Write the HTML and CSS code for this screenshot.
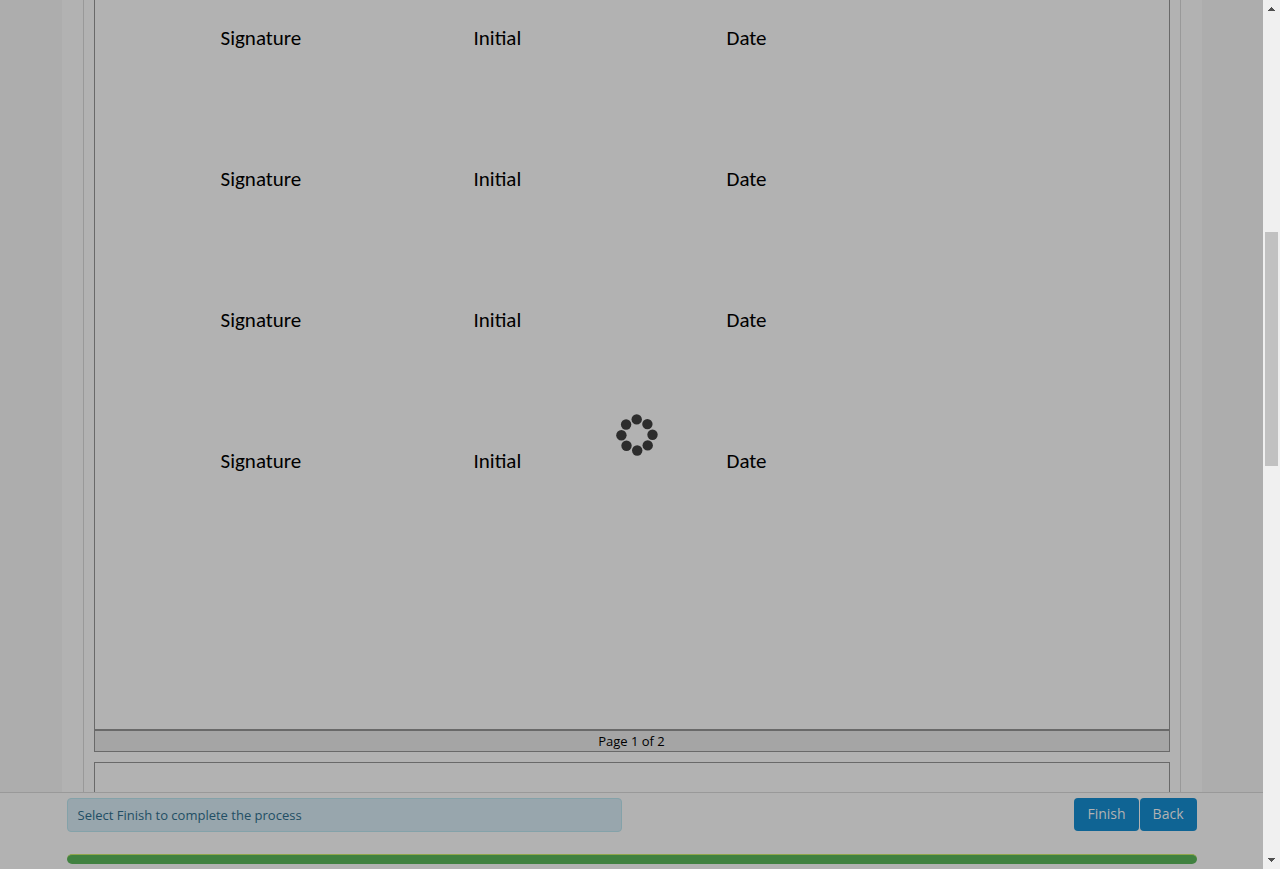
FILE: index.html
```html
<!DOCTYPE html>
<html lang="en">
<head>
<meta charset="utf-8">
<title>Sign document</title>
<link rel="stylesheet" href="styles.css">
</head>
<body>
<div class="window">
  <div class="app">
    <main class="viewer">
      <div class="container">
        <div class="document">
          <section class="page">
            <div class="fields">
              <span>Signature</span><span>Initial</span><span>Date</span>
              <span>Signature</span><span>Initial</span><span>Date</span>
              <span>Signature</span><span>Initial</span><span>Date</span>
              <span>Signature</span><span>Initial</span><span>Date</span>
            </div>
          </section>
          <div class="page-label">Page 1 of 2</div>
          <section class="page page-next"></section>
        </div>
      </div>
    </main>
    <footer class="footer">
      <div class="footer-inner">
        <div class="actions">
          <div class="notice" role="status">Select Finish to complete the process</div>
          <div class="buttons">
            <button type="button" class="btn">Finish</button>
            <button type="button" class="btn">Back</button>
          </div>
        </div>
        <div class="progress" role="progressbar" aria-label="Signing progress" aria-valuenow="100"></div>
      </div>
    </footer>
    <svg class="spinner" viewBox="0 0 42 42" role="img" aria-label="Loading">
      <circle cx="20.7" cy="5.4" r="5.2"/>
      <circle cx="31.4" cy="10.1" r="5.2"/>
      <circle cx="36.5" cy="20.7" r="5.2"/>
      <circle cx="31.7" cy="31.4" r="5.2"/>
      <circle cx="21.2" cy="36.5" r="5.2"/>
      <circle cx="10.5" cy="31.7" r="5.2"/>
      <circle cx="5.4" cy="21.2" r="5.2"/>
      <circle cx="10.1" cy="10.5" r="5.2"/>
    </svg>
  </div>
  <div class="scrollbar" aria-hidden="true">
    <svg class="arrow" viewBox="0 0 7 4" shape-rendering="crispEdges"><path d="M3 0h1v1h1v1h1v1h1v1H0V3h1V2h1V1h1z"/></svg>
    <div class="track"><div class="thumb"></div></div>
    <svg class="arrow" viewBox="0 0 7 4" shape-rendering="crispEdges"><path d="M0 0h7v1H6v1H5v1H4v1H3V3H2V2H1V1H0z"/></svg>
  </div>
</div>
</body>
</html>
```
FILE: styles.css
```css
* {
  box-sizing: border-box;
}

body {
  margin: 0;
  font-family: "Open Sans", "Noto Sans", sans-serif;
  font-size: 13px;
  line-height: 20px;
  color: #000;
}

.window {
  display: flex;
  height: 100vh;
  overflow: hidden;
}

.app {
  position: relative;
  display: flex;
  flex: 1;
  flex-direction: column;
  min-width: 0;
  background: #adadad;
}

.viewer {
  flex: 1;
  min-height: 0;
  overflow: hidden;
}

.container {
  max-width: 1140px;
  min-height: 100%;
  margin: 0 auto;
  padding: 0 21px;
  background: #b2b2b2;
}

.document {
  padding: 0 10px;
  border: solid #999;
  border-width: 0 1px;
}

.page {
  border: 1px solid #696969;
  border-top: 0;
  background: #b2b2b2;
}

.page-next {
  height: 120px;
  margin-top: 10px;
  border-top: 1px solid #696969;
}

.fields {
  display: grid;
  grid-template-columns: repeat(3, 253px);
  row-gap: 113px;
  padding: 24px 0 254px 126px;
  font-family: Carlito, Lato, sans-serif;
  font-size: 21px;
  line-height: 28px;
}

.page-label {
  border: 1px solid #696969;
  background: #a5a5a5;
  text-align: center;
}

.footer {
  padding: 5px 0;
  border-top: 1px solid #999;
  background: #b2b2b2;
}

.footer-inner {
  display: grid;
  gap: 22px;
  max-width: 1130px;
  margin: 0 auto;
}

.actions {
  display: flex;
  align-items: flex-start;
  justify-content: space-between;
}

.notice {
  flex: 0 1 555px;
  padding: 6px 10px;
  border: 1px solid #84a2a9;
  border-radius: 4px;
  background: #98a6ad;
  color: #224e64;
}

.buttons {
  display: flex;
  gap: 1px;
}

.btn {
  padding: 5px 13px 7px;
  border: 0;
  border-radius: 4px;
  background: #0f6494;
  color: #b2b2b2;
  font-family: inherit;
  font-size: 14px;
  line-height: 21px;
}

.progress {
  height: 10px;
  border-top: 1px solid #8fa64c;
  border-radius: 5px;
  background: #408140;
}

.spinner {
  position: absolute;
  top: calc(50% - 21px);
  left: calc(50% - 16px);
  width: 42px;
  height: 42px;
  fill: #2d2d2d;
}

.scrollbar {
  display: flex;
  flex: 0 0 17px;
  flex-direction: column;
  align-items: center;
  padding: 7px 0;
  background: #f0f0f0;
}

.arrow {
  width: 7px;
  height: 4px;
  fill: #505050;
}

.track {
  flex: 1;
  width: 13px;
  padding-top: 221px;
}

.thumb {
  height: 234px;
  background: #c1c1c1;
}
```
